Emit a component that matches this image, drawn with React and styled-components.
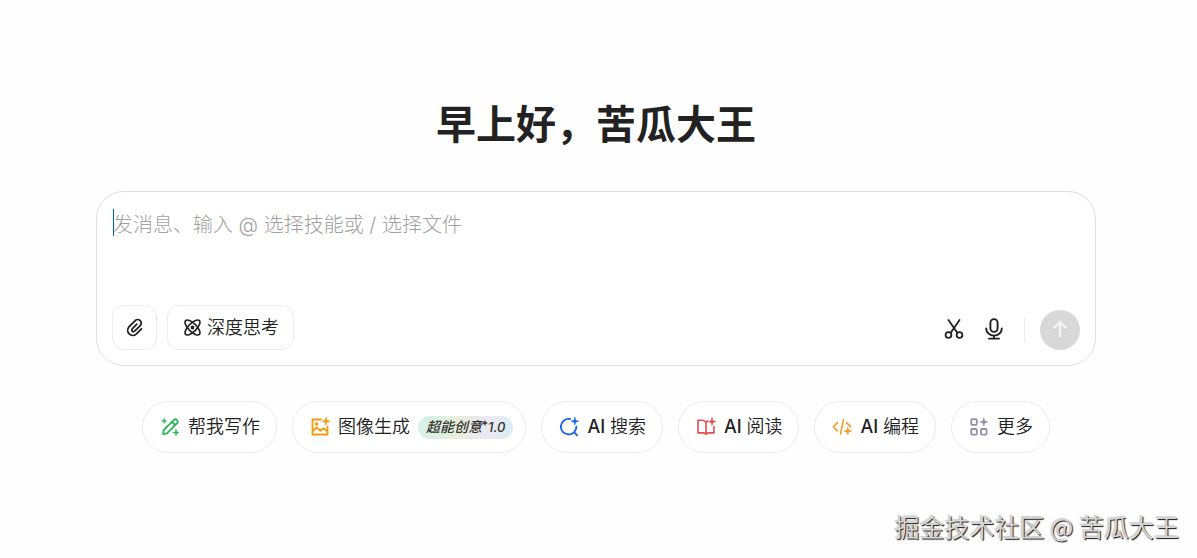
import React, { useState } from "react";
import styled, { createGlobalStyle } from "styled-components";

const GlobalStyle = createGlobalStyle`
  * {
    box-sizing: border-box;
  }

  body {
    margin: 0;
    background: #fefefe;
    color: #222;
    font-family: Inter, "Noto Sans CJK SC", sans-serif;
  }

  button,
  textarea {
    font-family: inherit;
    color: inherit;
  }
`;

const Page = styled.div`
  min-height: 100vh;
  display: flex;
  flex-direction: column;
  padding: 92px 18px 14px 13px;
`;

const Main = styled.main`
  width: 100%;
  max-width: 1000px;
  margin: 0 auto;
  display: flex;
  flex-direction: column;
`;

const Title = styled.h1`
  margin: 0 0 39px;
  font-family: "Noto Sans CJK SC", sans-serif;
  font-size: 40px;
  line-height: 60px;
  font-weight: 700;
  text-align: center;
`;

const Composer = styled.form`
  border: 1px solid #dedede;
  border-radius: 28px;
  padding: 15px;
  background: #fff;
`;

const Field = styled.div`
  position: relative;
  margin-bottom: 16px;

  &::before {
    content: "";
    position: absolute;
    z-index: 1;
    top: 2px;
    left: 1px;
    width: 1px;
    height: 27px;
    background: #0060a0;
  }
`;

const Message = styled.textarea`
  display: block;
  width: 100%;
  height: 82px;
  padding: 3px 1px 0;
  border: none;
  outline: none;
  resize: none;
  background: transparent;
  caret-color: transparent;
  font-size: 20px;
  line-height: 30px;
  font-weight: 300;

  &::placeholder {
    color: #a0a0a0;
    opacity: 1;
  }
`;

const Toolbar = styled.div`
  display: flex;
  align-items: center;
  gap: 10px;
`;

const ToolButton = styled.button`
  display: flex;
  align-items: center;
  justify-content: center;
  gap: 5px;
  height: 45px;
  min-width: 45px;
  padding: 0 ${(props) => (props.$wide ? "14px" : "0")};
  border: 1px solid #ebebeb;
  border-radius: 12px;
  background: #fff;
  font-size: 18px;
  line-height: 24px;
  font-weight: 350;
  cursor: pointer;
`;

const Actions = styled.div`
  display: flex;
  align-items: center;
  gap: 16px;
  margin: 5px 0 0 auto;
`;

const IconButton = styled.button`
  display: flex;
  padding: 0 0 2px;
  border: none;
  background: none;
  cursor: pointer;
`;

const Divider = styled.span`
  width: 1px;
  height: 25px;
  margin-left: 2px;
  background: #ececec;
`;

const SendButton = styled.button`
  display: flex;
  align-items: center;
  justify-content: center;
  width: 40px;
  height: 40px;
  margin-left: -1px;
  padding: 0 0 2px;
  border: none;
  border-radius: 50%;
  background: #d8d8d8;
  color: #f3f3f3;
`;

const Skills = styled.div`
  display: flex;
  flex-wrap: wrap;
  justify-content: center;
  gap: 15px;
  margin-top: 35px;
`;

const Skill = styled.button`
  display: flex;
  align-items: center;
  gap: 8px;
  height: 52px;
  padding: 0 ${(props) => (props.$badged ? "12px" : "16px")} 0 17px;
  border: 1px solid #ebebeb;
  border-radius: 26px;
  background: #fff;
  font-size: 18px;
  line-height: 26px;
  font-weight: 350;
  white-space: nowrap;
  cursor: pointer;

  > svg {
    color: ${(props) => props.$color};
  }
`;

const Latin = styled.span`
  font-weight: 500;
`;

const Badge = styled.span`
  display: flex;
  align-items: center;
  height: 23px;
  padding: 0 8px;
  border-radius: 12px;
  background: linear-gradient(100deg, #d3f1e9 0%, #e6efda 40%, #ece8f2 72%, #d8eef0 100%);
  color: #333;
  font-size: 14px;
  font-style: italic;
  font-weight: 500;
`;

const Version = styled.span`
  font-size: 13px;
`;

const Watermark = styled.footer`
  margin-top: auto;
  align-self: flex-end;
  font-family: "Noto Sans CJK SC", sans-serif;
  font-size: 25px;
  line-height: 36px;
  font-weight: 350;
  color: #d6d6d6;
  text-shadow: 1px 1px 1px #111, -1px -1px 1px #ccc;
`;

const Icon = ({ size = 20, width = 1.6, children }) => (
  <svg
    width={size}
    height={size}
    viewBox="0 0 20 20"
    fill="none"
    stroke="currentColor"
    strokeWidth={width}
    strokeLinecap="round"
    strokeLinejoin="round"
    aria-hidden="true"
  >
    {children}
  </svg>
);

// four-pointed star centred on x, y
const Spark = ({ x, y, r = 3.5 }) => (
  <path
    d={`M${x} ${y - r}L${x + r * 0.24} ${y - r * 0.24}L${x + r} ${y}L${x + r * 0.24} ${y + r * 0.24}L${x} ${y + r}L${x - r * 0.24} ${y + r * 0.24}L${x - r} ${y}L${x - r * 0.24} ${y - r * 0.24}Z`}
    fill="currentColor"
    strokeWidth="0.6"
  />
);

const ClipIcon = () => (
  <Icon width={1.8}>
    <path d="M11.8 6.2 7.2 10.8a1.7 1.7 0 0 0 2.4 2.4l5.6-5.6a3.5 3.5 0 0 0-5-5L4 8.9a5.1 5.1 0 0 0 7.2 7.2l5.3-5.3" />
  </Icon>
);

const AtomIcon = () => (
  <Icon width={1.6}>
    <ellipse cx="10.5" cy="9.5" rx="9.8" ry="4" transform="rotate(45 10.5 9.5)" />
    <ellipse cx="10.5" cy="9.5" rx="9.8" ry="4" transform="rotate(-45 10.5 9.5)" />
    <circle cx="10.5" cy="9.5" r="1.1" fill="currentColor" />
  </Icon>
);

const ScissorsIcon = () => (
  <Icon size={24} width={1.5}>
    <path d="M5.4 2.5 12.6 13M14.6 2.5 7.4 13" />
    <circle cx="5.4" cy="15" r="2.4" />
    <circle cx="14.6" cy="15" r="2.4" />
  </Icon>
);

const MicIcon = () => (
  <Icon size={24} width={1.6}>
    <rect x="7" y="1.8" width="6" height="10.6" rx="3" />
    <path d="M3.5 9.5a6.5 6 0 0 0 13 0M10 15.5V18M5.8 18h8.4" />
  </Icon>
);

const ArrowIcon = () => (
  <Icon width={2.3}>
    <path d="M10 17V3.5M4.2 8.8 10 3l5.8 5.8" />
  </Icon>
);

const WriteIcon = () => (
  <Icon width={1.8}>
    <path d="M3.2 17.2 3.6 13 14 2.8a1.9 1.9 0 0 1 2.7 0l.5.5a1.9 1.9 0 0 1 0 2.7L7 16.4ZM12 5l3 3" />
    <Spark x={4.2} y={4} r={2.6} />
    <Spark x={16} y={15.6} r={3.2} />
  </Icon>
);

const ImageIcon = () => (
  <Icon width={1.8}>
    <path d="M11 2.5H2.5v15h15V9.5M2.8 14l4-3.6 3.5 3.3 3.2-2.5 3.8 3" />
    <circle cx="6.5" cy="7" r="0.9" fill="currentColor" />
    <Spark x={16} y={4.2} r={4} />
  </Icon>
);

const SearchIcon = () => (
  <Icon width={1.8}>
    <path d="M11 2A7.8 7.8 0 1 0 17.4 9.6M15 15.2l3.2 3.2" />
    <Spark x={15.8} y={4.2} r={3.8} />
  </Icon>
);

const BookIcon = () => (
  <Icon>
    <path d="M10 16.5V5.4C9.2 4 8 3.3 6.2 3.3H2v12.6h5.2c1.5 0 2.3.5 2.8 1.4.5-.9 1.3-1.4 2.8-1.4H18V9.5M10 5.4c.3-.7.8-1.2 1.5-1.5" />
    <Spark x={16} y={4.6} r={3.8} />
  </Icon>
);

const CodeIcon = () => (
  <Icon>
    <path d="M5.4 5.6 1.3 9.8l4.1 4.2M11.5 2.8 8.5 17.2M14.5 5.6l4.1 4" />
    <Spark x={15.8} y={14} r={3.8} />
  </Icon>
);

const MoreIcon = () => (
  <Icon width={1.8}>
    <rect x="2.2" y="2.2" width="5.6" height="5.6" rx="1" />
    <rect x="2.2" y="12" width="5.6" height="5.6" rx="1" />
    <rect x="12" y="12" width="5.6" height="5.6" rx="1" />
    <Spark x={14.8} y={5} r={4} />
  </Icon>
);

const skills = [
  { label: "帮我写作", color: "#2fb457", icon: WriteIcon },
  { label: "图像生成", color: "#f59a0b", icon: ImageIcon, badge: true },
  { latin: "AI", label: "搜索", color: "#1463ea", icon: SearchIcon },
  { latin: "AI", label: "阅读", color: "#e94b4b", icon: BookIcon },
  { latin: "AI", label: "编程", color: "#f59a23", icon: CodeIcon },
  { label: "更多", color: "#9290a8", icon: MoreIcon },
];

const App = () => {
  const [message, setMessage] = useState("");

  return (
    <>
      <GlobalStyle />
      <Page>
        <Main>
          <Title>早上好，苦瓜大王</Title>
          <Composer onSubmit={(e) => e.preventDefault()}>
            <Field>
              <Message
                aria-label="发消息"
                placeholder="发消息、输入 @ 选择技能或 / 选择文件"
                value={message}
                onChange={(e) => setMessage(e.target.value)}
              />
            </Field>
            <Toolbar>
              <ToolButton type="button" aria-label="选择文件">
                <ClipIcon />
              </ToolButton>
              <ToolButton type="button" $wide>
                <AtomIcon />
                深度思考
              </ToolButton>
              <Actions>
                <IconButton type="button" aria-label="截图">
                  <ScissorsIcon />
                </IconButton>
                <IconButton type="button" aria-label="语音">
                  <MicIcon />
                </IconButton>
                <Divider />
                <SendButton type="submit" aria-label="发送">
                  <ArrowIcon />
                </SendButton>
              </Actions>
            </Toolbar>
          </Composer>
          <Skills>
            {skills.map(({ latin, label, color, icon: Glyph, badge }) => (
              <Skill key={label} type="button" $color={color} $badged={badge}>
                <Glyph />
                <span>
                  {latin && <Latin>{latin} </Latin>}
                  {label}
                </span>
                {badge && (
                  <Badge>
                    超能创意
                    <svg width="6" height="14" viewBox="0 0 6 14" aria-hidden="true">
                      <path d="M3 0 3.9 2.1 6 3 3.9 3.9 3 6 2.1 3.9 0 3 2.1 2.1Z" fill="currentColor" />
                    </svg>
                    <Version>1.0</Version>
                  </Badge>
                )}
              </Skill>
            ))}
          </Skills>
        </Main>
        <Watermark>掘金技术社区 @ 苦瓜大王</Watermark>
      </Page>
    </>
  );
};

export default App;
